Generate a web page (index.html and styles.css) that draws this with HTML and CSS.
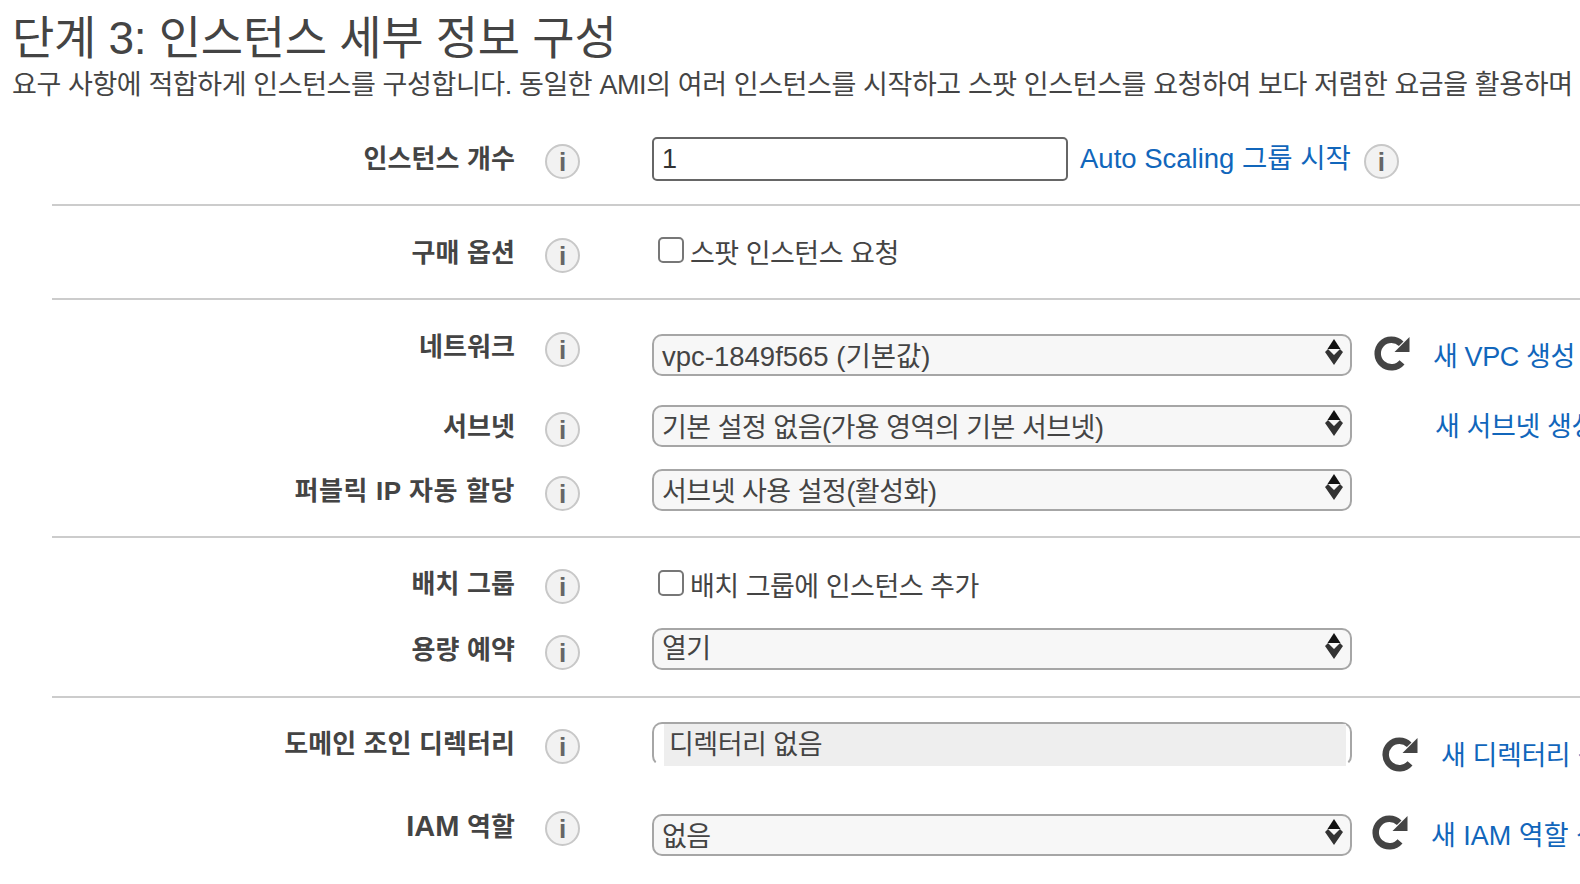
FILE: index.html
```html
<!DOCTYPE html>
<html lang="ko">
<head>
    <meta charset="UTF-8">
    <meta name="viewport" content="width=device-width, initial-scale=1.0">
    <title>단계 3: 인스턴스 세부 정보 구성</title>
    <link rel="stylesheet" href="styles.css">
</head>
<body>
    <h1 class="title">단계 3: 인스턴스 세부 정보 구성</h1>
    <p class="subtitle">요구 사항에 적합하게 인스턴스를 구성합니다. 동일한 AMI의 여러 인스턴스를 시작하고 스팟 인스턴스를 요청하여 보다 저렴한 요금을 활용하며</p>

    <svg class="sprites" width="0" height="0">
        <symbol id="arrows" viewBox="0 0 18 26">
            <path d="M9 0 L15.5 10 H2.5 Z" fill="#111"/>
            <path d="M0 13 L3 10 L9 16 L15 10 L18 13 L9 26 Z" fill="#333"/>
        </symbol>
        <symbol id="refresh" viewBox="0 0 36 36">
            <path d="M28 27.3 A13.75 13.75 0 1 1 27.2 8.8" fill="none" stroke="#444" stroke-width="6.5"/>
            <path d="M35.5 2 V17 H20.5 Z" fill="#444"/>
        </symbol>
    </svg>

    <form class="form">
        <section class="group group-count">
            <div class="row">
                <label class="label">인스턴스 개수</label>
                <span class="info">i</span>
                <input class="count-input" type="text" value="1">
                <a class="link link-scaling" href="#">Auto Scaling 그룹 시작</a>
                <span class="info info-after">i</span>
            </div>
        </section>

        <section class="group group-purchase">
            <div class="row">
                <label class="label">구매 옵션</label>
                <span class="info">i</span>
                <label class="check"><input type="checkbox">스팟 인스턴스 요청</label>
            </div>
        </section>

        <section class="group group-network">
            <div class="row row-network">
                <label class="label">네트워크</label>
                <span class="info">i</span>
                <div class="select drop select-vpc"><span>vpc-1849f565 (기본값)</span><svg class="arrows"><use href="#arrows"/></svg></div>
                <svg class="refresh refresh-drop"><use href="#refresh"/></svg>
                <a class="link link-vpc" href="#">새 VPC 생성</a>
            </div>
            <div class="row row-subnet">
                <label class="label">서브넷</label>
                <span class="info">i</span>
                <div class="select raise"><span>기본 설정 없음(가용 영역의 기본 서브넷)</span><svg class="arrows"><use href="#arrows"/></svg></div>
                <a class="link link-subnet" href="#">새 서브넷 생성</a>
            </div>
            <div class="row row-public">
                <label class="label label-wide">퍼블릭 IP 자동 할당</label>
                <span class="info">i</span>
                <div class="select raise"><span>서브넷 사용 설정(활성화)</span><svg class="arrows"><use href="#arrows"/></svg></div>
            </div>
        </section>

        <section class="group group-placement">
            <div class="row row-placement">
                <label class="label">배치 그룹</label>
                <span class="info">i</span>
                <label class="check check-placement"><input type="checkbox">배치 그룹에 인스턴스 추가</label>
            </div>
            <div class="row row-capacity">
                <label class="label">용량 예약</label>
                <span class="info">i</span>
                <div class="select raise select-capacity"><span>열기</span><svg class="arrows"><use href="#arrows"/></svg></div>
            </div>
        </section>

        <section class="group group-last">
            <div class="row row-directory">
                <label class="label">도메인 조인 디렉터리</label>
                <span class="info">i</span>
                <div class="select select-disabled"><span>디렉터리 없음</span></div>
                <svg class="refresh refresh-directory"><use href="#refresh"/></svg>
                <a class="link link-directory" href="#">새 디렉터리 생성</a>
            </div>
            <div class="row row-iam">
                <label class="label"><span class="latin">IAM</span> 역할</label>
                <span class="info">i</span>
                <div class="select drop"><span>없음</span><svg class="arrows"><use href="#arrows"/></svg></div>
                <svg class="refresh refresh-iam"><use href="#refresh"/></svg>
                <a class="link link-iam" href="#">새 IAM 역할 생성</a>
            </div>
        </section>
    </form>
</body>
</html>
```

FILE: styles.css
```css
html, body {
    overflow: hidden;
}

body {
    margin: 0;
    height: 884px;
    font-family: "Liberation Sans", "Noto Sans CJK KR", sans-serif;
    color: #444;
    background: #fff;
}

.sprites {
    display: block;
}

.title {
    margin: 0;
    padding: 12px 0 0 12px;
    height: 50px;
    font-size: 46px;
    line-height: 52px;
    font-weight: 400;
    letter-spacing: -0.3px;
    white-space: nowrap;
}

.subtitle {
    margin: 0;
    padding: 6px 0 0 12px;
    font-size: 27px;
    line-height: 34px;
    letter-spacing: -0.4px;
    white-space: nowrap;
    color: #444;
}

.form {
    margin-left: 52px;
    padding-top: 35px;
}

.group {
    border-bottom: 2px solid #ccc;
    box-sizing: border-box;
}

.group-count { height: 69px; }
.group-purchase { height: 94px; }
.group-network { height: 238px; }
.group-placement { height: 160px; }
.group-last { border-bottom: none; }

.row {
    display: flex;
    align-items: flex-start;
}

.label {
    width: 463px;
    flex: none;
    padding-top: 4px;
    text-align: right;
    font-size: 26px;
    line-height: 36px;
    font-weight: 700;
    letter-spacing: 0.1px;
    white-space: nowrap;
    color: #444;
}

.label-wide {
    letter-spacing: 0.6px;
}

.latin {
    font-size: 29px;
}

.info {
    flex: none;
    width: 31px;
    height: 31px;
    margin: 7px 72px 0 30px;
    border: 2px solid #c8c8c8;
    border-radius: 50%;
    background: #f2f2f2;
    text-align: center;
    font: 700 26px/32px "Liberation Sans", sans-serif;
    color: #666;
}

.info-after {
    margin: 7px 0 0 13px;
}

.count-input {
    flex: none;
    box-sizing: border-box;
    width: 416px;
    height: 44px;
    padding: 0 8px;
    border: 2px solid #666;
    border-radius: 5px;
    font: 27px "Liberation Sans", sans-serif;
    color: #333;
    outline: none;
}

.link {
    margin-top: 2px;
    color: #1166bb;
    font-size: 27px;
    line-height: 40px;
    letter-spacing: -0.4px;
    text-decoration: none;
    white-space: nowrap;
}

.link-scaling {
    margin-left: 12px;
    font-size: 27.5px;
    letter-spacing: 0;
}

.check {
    display: flex;
    align-items: center;
    height: 36px;
    padding-top: 2px;
    margin-left: 6px;
    font-size: 27px;
    letter-spacing: -0.5px;
    white-space: nowrap;
    color: #444;
}

.check-placement {
    margin-top: 2px;
}

.check input {
    appearance: none;
    box-sizing: border-box;
    width: 26px;
    height: 26px;
    margin: 0 6px 2px 0;
    border: 2px solid #777;
    border-radius: 5px;
    background: #fff;
}

.select {
    position: relative;
    flex: none;
    box-sizing: border-box;
    display: flex;
    align-items: center;
    width: 700px;
    height: 42px;
    padding: 0 8px;
    border: 2px solid #a6a6a6;
    border-radius: 10px;
    background: #f7f7f7;
    font-size: 27px;
    letter-spacing: -0.5px;
    white-space: nowrap;
    color: #444;
}

.drop {
    margin-top: 10px;
    padding-bottom: 2px;
}

.raise {
    padding-bottom: 2px;
}

.select-capacity {
    padding-bottom: 6px;
}

.select-vpc {
    margin-top: 9px;
    font-size: 27.5px;
    letter-spacing: 0;
}

.arrows {
    position: absolute;
    right: 7px;
    top: 3px;
    width: 18px;
    height: 26px;
}

.select-disabled {
    height: 44px;
    padding: 0 4px 0 10px;
    background: #fff;
    border-bottom-color: transparent;
}

.select-disabled span {
    flex: 1;
    align-self: flex-start;
    height: 42px;
    padding-left: 5px;
    line-height: 42px;
    background: #eee;
}

.refresh {
    flex: none;
    width: 36px;
    height: 36px;
    margin: 0 23px 0 22px;
}

.refresh-drop {
    margin-top: 10px;
}

.refresh-directory {
    margin: 14px 23px 0 30px;
}

.refresh-iam {
    margin: 10px 23px 0 20px;
}

.group-purchase .row { padding-top: 25px; }

.row-network { padding-top: 25px; }
.row-subnet { padding-top: 28px; }
.row-public { padding-top: 22px; }
.row-placement { padding-top: 24px; }
.row-capacity { padding-top: 24px; }
.row-directory { padding-top: 24px; }
.row-iam { padding-top: 28px; }

.link-vpc { margin-top: 12px; }
.link-subnet { margin-left: 83px; }
.link-directory { margin-top: 14px; }
.link-iam { margin-top: 12px; letter-spacing: 0; }
```
